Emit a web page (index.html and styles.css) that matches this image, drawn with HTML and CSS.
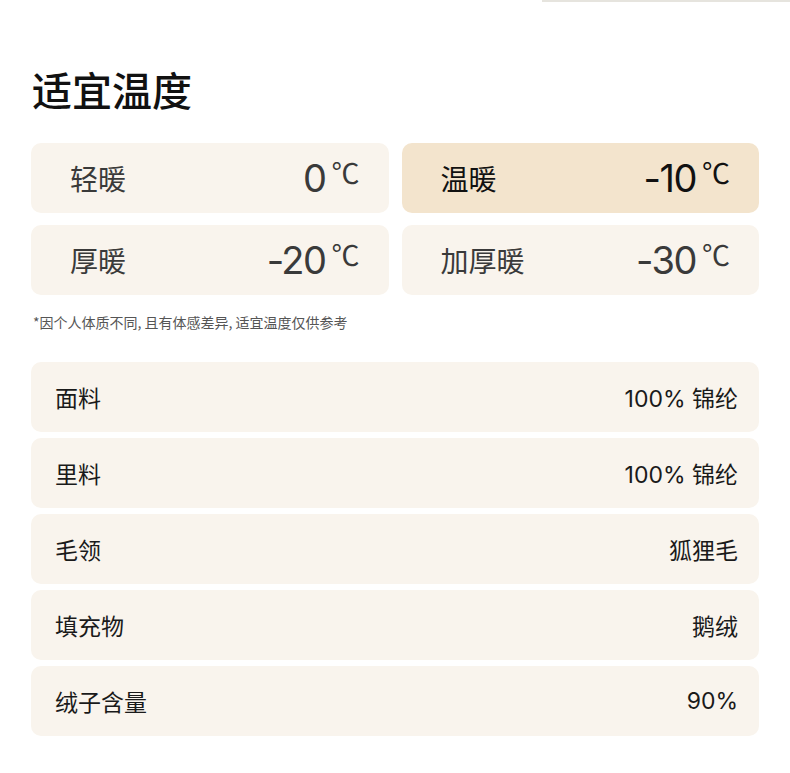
FILE: index.html
```html
<!DOCTYPE html>
<html lang="zh-CN">
<head>
<meta charset="utf-8">
<link rel="stylesheet" href="styles.css">
</head>
<body>
<div class="topline"></div>
<h1 class="title">适宜温度</h1>
<div class="temps">
  <div class="temp"><span class="tlabel">轻暖</span><span class="tval"><span class="num">0</span><span class="deg">℃</span></span></div>
  <div class="temp active"><span class="tlabel">温暖</span><span class="tval"><span class="num">-10</span><span class="deg">℃</span></span></div>
  <div class="temp"><span class="tlabel">厚暖</span><span class="tval"><span class="num">-20</span><span class="deg">℃</span></span></div>
  <div class="temp"><span class="tlabel">加厚暖</span><span class="tval"><span class="num">-30</span><span class="deg">℃</span></span></div>
</div>
<p class="note">*因个人体质不同, 且有体感差异, 适宜温度仅供参考</p>
<div class="specs">
  <div class="row"><span class="k">面料</span><span class="v">100% 锦纶</span></div>
  <div class="row"><span class="k">里料</span><span class="v">100% 锦纶</span></div>
  <div class="row"><span class="k">毛领</span><span class="v">狐狸毛</span></div>
  <div class="row"><span class="k">填充物</span><span class="v">鹅绒</span></div>
  <div class="row"><span class="k">绒子含量</span><span class="v">90%</span></div>
</div>
</body>
</html>
```
FILE: styles.css
```css
* { box-sizing: border-box; }
html, body { margin: 0; padding: 0; background: #fff; }
body {
  width: 790px;
  font-family: "Noto Sans CJK SC", "Noto Sans", sans-serif;
  color: #1a1a1a;
}
.topline {
  height: 2px;
  margin-left: 542px;
  background: #e6e4de;
}
.title {
  margin: 0;
  padding: 58px 0 0 32px;
  font-size: 40px;
  line-height: 58px;
  font-weight: 500;
  color: #111;
}
.temps {
  margin: 25px 31px 0 31px;
  display: grid;
  grid-template-columns: 1fr 1fr;
  gap: 12px 13px;
}
.temp {
  height: 70px;
  border-radius: 10px;
  background: #f9f4ed;
  display: flex;
  align-items: center;
  justify-content: space-between;
  padding: 0 29px 0 39px;
  color: #3a3a3a;
}
.temp.active { background: #f3e4cd; color: #111; }
.tlabel { font-size: 28px; }
.tval { display: flex; align-items: flex-start; }
.num {
  font-family: Inter, "Noto Sans", sans-serif;
  font-size: 38px;
  line-height: 48px;
  letter-spacing: -1.5px;
}
.deg {
  font-size: 28px;
  line-height: 32px;
  margin-left: 6px;
  margin-top: 2px;
}
.note {
  margin: 17px 0 0 33px;
  font-size: 14px;
  line-height: 20px;
  color: #555;
}
.specs {
  margin: 30px 31px 0 31px;
  display: flex;
  flex-direction: column;
  gap: 6px;
}
.row {
  height: 70px;
  border-radius: 10px;
  background: #f9f4ed;
  display: flex;
  align-items: center;
  justify-content: space-between;
  padding: 0 21px 0 24px;
  font-size: 23px;
  color: #1a1a1a;
}
.v { font-family: Inter, "Noto Sans CJK SC", sans-serif; }
```
